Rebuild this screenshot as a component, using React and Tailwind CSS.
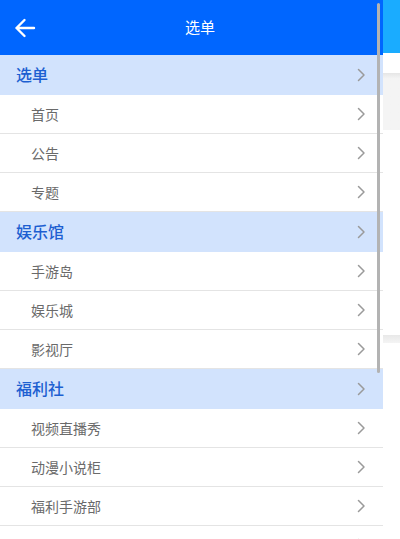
import React from 'react';

const menu = [
  { title: '选单', items: ['首页', '公告', '专题'] },
  { title: '娱乐馆', items: ['手游岛', '娱乐城', '影视厅'] },
  { title: '福利社', items: ['视频直播秀', '动漫小说柜', '福利手游部', ''] },
];

const Chevron = () => (
  <svg width="9" height="14" viewBox="0 0 9 14" fill="none" className="shrink-0">
    <polyline points="1.5,1.5 7,7 1.5,12.5" stroke="#9a9a9a" strokeWidth="1.5" strokeLinecap="round" strokeLinejoin="round" />
  </svg>
);

const SectionRow = ({ title }) => (
  <div className="flex h-[40px] items-center justify-between bg-[#d2e3fd] pl-[16px] pr-[17px]">
    <span className="text-[16px] font-medium text-[#1d5fd1]">{title}</span>
    <Chevron />
  </div>
);

const ItemRow = ({ label }) => (
  <div className="flex h-[39px] items-center justify-between border-b border-[#e4e4e4] bg-white pl-[31px] pr-[17px]">
    <span className="text-[14px] text-[#6a6a6a]">{label}</span>
    <Chevron />
  </div>
);

export default function App() {
  return (
    <div
      className="relative h-[539px] w-[400px] overflow-hidden bg-white"
      style={{ fontFamily: '"Noto Sans", "Noto Sans CJK SC", sans-serif' }}
    >
      {/* page underneath the drawer */}
      <div className="flex flex-col">
        <div className="h-[53px] bg-[#1aacff]" />
        <div className="h-[20px] bg-white" />
        <div className="h-[57px] bg-gradient-to-b from-[#e6e6e6] to-[#f4f4f4] to-[10%]" />
        <div className="h-[205px] bg-white" />
        <div className="h-[8px] bg-gradient-to-b from-[#e8e8e8] to-[#f4f4f4]" />
      </div>

      {/* drawer */}
      <div className="absolute left-0 top-0 flex h-full w-[383px] flex-col bg-white">
        <div className="flex h-[55px] shrink-0 items-center bg-[#0066ff] pl-[14px]">
          <svg width="22" height="20" viewBox="0 0 22 20" fill="none">
            <path d="M20 10H2.5M10.5 2L2.5 10l8 8" stroke="white" strokeWidth="2.4" strokeLinecap="round" strokeLinejoin="round" />
          </svg>
          <span className="ml-[149px] text-[15px] text-white">选单</span>
        </div>
        <div className="flex flex-col">
          {menu.map((sec) => (
            <div key={sec.title} className="flex flex-col">
              <SectionRow title={sec.title} />
              {sec.items.map((it, i) => (
                <ItemRow key={i} label={it} />
              ))}
            </div>
          ))}
        </div>
      </div>

      {/* scrollbar */}
      <div className="absolute left-[377px] top-[3px] h-[370px] w-[3px] rounded-full bg-[#b3b3b3]" />
    </div>
  );
}
